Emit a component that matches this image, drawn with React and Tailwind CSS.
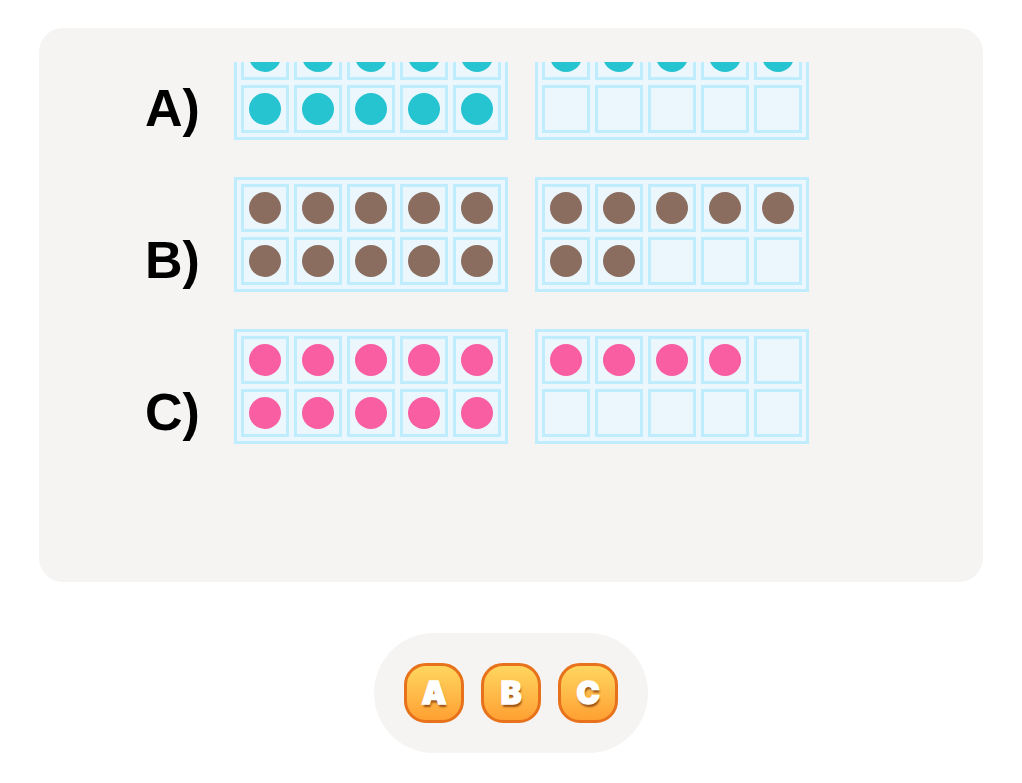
const ROWS = [
  { label: "A)", color: "bg-[#26c3d0]", counts: [10, 5] },
  { label: "B)", color: "bg-[#8b6d60]", counts: [10, 7] },
  { label: "C)", color: "bg-[#f85ea1]", counts: [10, 4] },
];

function TenFrame({ filled, color }) {
  return (
    <div className="grid grid-cols-5 gap-[5px] border-[3px] border-[#bfedfd] bg-[#ebf7fc] p-[4px]">
      {Array.from({ length: 10 }).map((_, i) => (
        <div key={i} className="flex h-[48px] w-[48px] items-center justify-center border-[3px] border-[#bfedfd] bg-[#ebf7fc]">
          {i < filled && <div className={`h-[32px] w-[32px] rounded-full ${color}`} />}
        </div>
      ))}
    </div>
  );
}

function AnswerButton({ letter }) {
  return (
    <button
      type="button"
      className="flex h-[60px] w-[60px] items-center justify-center rounded-[22px] border-[3px] border-[#e8711b] bg-gradient-to-b from-[#ffd65e] to-[#ffa032] pb-[2px] text-[31px] font-black leading-none text-white [-webkit-text-stroke:1.5px_white] [text-shadow:1px_3px_2px_rgba(110,40,0,0.7)]"
      style={{ fontFamily: "Inter, 'DejaVu Sans', sans-serif" }}
    >
      {letter}
    </button>
  );
}

export default function App() {
  return (
    <div className="min-h-screen bg-white px-[39px] pt-[28px]" style={{ fontFamily: "'Liberation Sans', Arial, sans-serif" }}>
      <div className="flex h-[554px] flex-col rounded-3xl bg-[#f5f4f2] pt-[34px]">
        <div className="flex-1 overflow-hidden">
          <div className="-mt-[37px] flex flex-col gap-[37px] pl-[106px]">
            {ROWS.map((row) => (
              <div key={row.label} className="flex items-start">
                <div className="mt-[57px] w-[89px] text-[52px] font-bold leading-none text-black">{row.label}</div>
                <div className="flex gap-[27px]">
                  {row.counts.map((n, i) => (
                    <TenFrame key={i} filled={n} color={row.color} />
                  ))}
                </div>
              </div>
            ))}
          </div>
        </div>
      </div>
      <div className="mt-[51px] flex justify-center">
        <div className="flex gap-[17px] rounded-full bg-[#f5f4f2] p-[30px]">
          {["A", "B", "C"].map((l) => (
            <AnswerButton key={l} letter={l} />
          ))}
        </div>
      </div>
    </div>
  );
}
